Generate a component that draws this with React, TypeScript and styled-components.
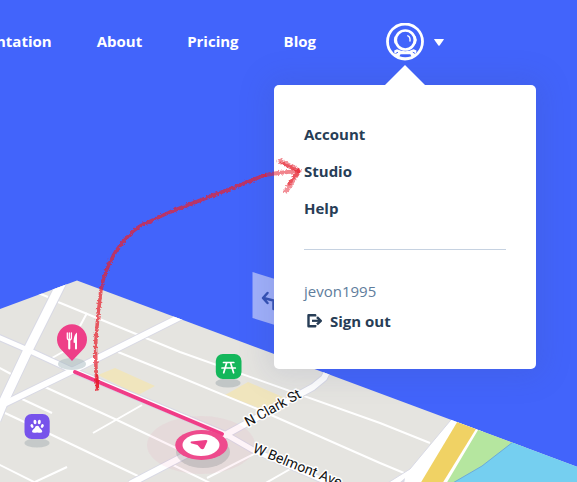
import React from "react";
import styled, { createGlobalStyle } from "styled-components";

const GlobalStyle = createGlobalStyle`
  *, *::before, *::after { box-sizing: border-box; }
  body {
    margin: 0;
    background: #4264fb;
    font-family: "Open Sans", "Noto Sans", sans-serif;
    font-size: 15px;
    line-height: 20px;
  }
`;

const Page = styled.div`
  position: relative;
  min-height: 100vh;
  overflow: hidden;
  background: #4264fb;
`;

const Backdrop = styled.svg`
  position: absolute;
  inset: 0;
  width: 100%;
  height: 100%;
`;

const Annotation = styled(Backdrop)`
  z-index: 3;
  pointer-events: none;
`;

const Header = styled.header`
  position: relative;
  z-index: 2;
  display: flex;
  align-items: flex-start;
  justify-content: flex-end;
  gap: 70px;
  padding: 23px 133px 0 0;
`;

const Nav = styled.nav`
  display: flex;
  gap: 45px;
  padding-top: 8px;
`;

const NavLink = styled.a`
  color: #fff;
  font-weight: 700;
  text-decoration: none;
`;

const Account = styled.div`
  position: relative;
`;

const AccountButton = styled.button`
  display: flex;
  align-items: center;
  gap: 10px;
  padding: 0;
  border: 0;
  background: none;
  color: #fff;
  cursor: pointer;
`;

const Menu = styled.div`
  position: absolute;
  top: 62px;
  right: -92px;
  width: 262px;
  padding: 30px 30px 38px;
  border-radius: 5px;
  background: #fff;
  box-shadow: 0 0 30px 8px rgba(60, 75, 130, 0.13);

  &::before {
    content: "";
    position: absolute;
    top: -20px;
    left: 111px;
    border: 20px solid transparent;
    border-top: 0;
    border-bottom-color: #fff;
  }
`;

const MenuList = styled.ul`
  display: flex;
  flex-direction: column;
  margin: 0;
  padding: 0;
  list-style: none;
`;

const MenuItem = styled.li`
  padding: 9px 0 8px;
`;

const MenuLink = styled.a`
  display: block;
  color: #273d56;
  font-size: 15px;
  font-weight: 700;
  text-decoration: none;
`;

const Divider = styled.hr`
  height: 1px;
  margin: 23px 0 31px;
  border: 0;
  background: #c6d2e1;
`;

const UserName = styled.div`
  color: #607d9c;
  font-size: 15px;
`;

const SignOut = styled.button`
  display: flex;
  align-items: center;
  gap: 7px;
  margin-top: 10px;
  padding: 0 0 0 3px;
  border: 0;
  background: none;
  color: #273d56;
  font: inherit;
  font-weight: 700;
  cursor: pointer;
`;

const NAV_ITEMS = ["Documentation", "About", "Pricing", "Blog"];
const MENU_ITEMS = ["Account", "Studio", "Help"];

const WIDE_ROADS = [
  { d: "M63 280L28 350L3 403L-4 420", w: 9 },
  { d: "M-2 337L28 350L67 368L227 435L253 450L350 492", w: 5 },
  { d: "M184 315L82 366L43 385L-2 407", w: 6 },
  { d: "M329 368L324 378L313 387L227 434L180 458L130 484", w: 6 },
];

const SIDE_STREETS = [
  "M38 293L48 297",
  "M58 302L180 352L380 423L430 443",
  "M118 352L180 377L262 411L380 463L404 473",
  "M45 387L117 420L178 449",
  "M173 465L212 484",
  "M93 433L142 405",
  "M22 399L52 413",
  "M-2 367L11 374",
  "M5 413L50 434L140 477",
  "M-2 464L38 484",
  "M35 482L67 467",
  "M87 313L80 326",
  "M52 358L68 349",
  "M207 478L256 453",
  "M264 484L292 468",
];

const STREET_LABEL = {
  fontFamily: '"Roboto", "Inter", sans-serif',
  fontSize: 14,
  fill: "#111",
  stroke: "#fff",
  strokeWidth: 3,
  strokeLinejoin: "round" as const,
  paintOrder: "stroke",
};

function Avatar() {
  return (
    <svg width="38" height="38" viewBox="0 0 38 38" fill="none" aria-hidden="true">
      <circle cx="19" cy="18.500" r="17.500" stroke="currentColor" strokeWidth="2.800" />
      <circle cx="19.300" cy="17" r="9.500" stroke="currentColor" strokeWidth="2.600" />
      <path d="M9.200 13.500Q7.400 17 9.200 20.500ZM29.400 13.500Q31.200 17 29.400 20.500Z" fill="currentColor" stroke="currentColor" />
      <path d="M21.800 12.800Q24.400 13.800 24 18" stroke="currentColor" strokeWidth="1.400" strokeLinecap="round" />
      <path d="M11 26.300Q19.300 30 27.600 26.300L30.500 27.500L30 31.500Q25 36 19 36Q13 36 8.500 31.500L8.200 27.500Z" fill="currentColor" />
      <path d="M14.500 31.300H24.300L25.300 33.200Q19 35.200 13.500 33.200Z" fill="#4264fb" />
      <path d="M9.500 30.500L12 29.200M29.300 30.500L26.800 29.200" stroke="#4264fb" strokeWidth="1" />
    </svg>
  );
}

function Caret() {
  return (
    <svg width="10" height="7" viewBox="0 0 10 7" fill="currentColor" aria-hidden="true">
      <path d="M.6 0H9.400Q10.200 0 9.700.8L5.600 6.400Q5 7.100 4.400 6.400L.3.800Q-.2 0 .6 0Z" />
    </svg>
  );
}

function SignOutIcon() {
  return (
    <svg width="16" height="14" viewBox="0 0 16 14" fill="none" stroke="currentColor" aria-hidden="true">
      <path d="M8.200 2.600V1.300H1.500V12.300H8.200V11" strokeWidth="2.400" strokeLinejoin="round" />
      <path d="M5 6.800H13" strokeWidth="2.200" />
      <path d="M10 3.200L13.800 6.800L10 10.400" strokeWidth="2.500" strokeLinejoin="round" />
    </svg>
  );
}

function CityMap() {
  return (
    <Backdrop viewBox="0 0 577 482" preserveAspectRatio="xMaxYMin slice" aria-label="Street map">
      <defs>
        <clipPath id="plane">
          <path d="M-2 309.700L77 280.500L579 467.500V484H-2Z" />
        </clipPath>
      </defs>

      <g clipPath="url(#plane)">
        <path d="M-2 260H600V500H-2Z" fill="#e5e4e0" />
        <path d="M98 375L115 368L155 386L138 395ZM225 395L248 382L285 398L262 409Z" fill="#f0e5bd" />

        <g fill="none" stroke="#fff" strokeWidth="2">
          {SIDE_STREETS.map((d) => (
            <path key={d} d={d} />
          ))}
        </g>
        <g fill="none" stroke="#d8d9e5" strokeLinejoin="round">
          {WIDE_ROADS.map(({ d, w }) => (
            <path key={d} d={d} strokeWidth={w + 2} />
          ))}
        </g>
        <g fill="none" stroke="#fff" strokeLinejoin="round">
          {WIDE_ROADS.map(({ d, w }) => (
            <path key={d} d={d} strokeWidth={w} />
          ))}
        </g>

        <path d="M455 415L410 469L386 484H450L490 420Z" fill="#fff" stroke="#d8d9e5" />
        <path d="M398 484L405 478L404 484Z" fill="#d8d9e5" />
        <path d="M459 419L420 484H442L479 424Z" fill="#f0d264" />
        <path d="M481 425L446 484H460L530 445Z" fill="#b5e69f" />
        <path d="M579 460L513 442L482 466L451 484H579Z" fill="#75cff0" />
        <path d="M513 442L482 466L451 484" fill="none" stroke="#6cabd8" />
      </g>

      <ellipse cx="201" cy="445" rx="54" ry="29" fill="#f03c87" opacity=".06" />
      <path d="M75 372L222 434" stroke="#f03c87" strokeWidth="4" strokeLinecap="round" />

      <text {...STREET_LABEL} transform="translate(248 427) rotate(-29)">N Clark St</text>
      <text {...STREET_LABEL} transform="translate(252 452) rotate(22)">W Belmont Ave</text>

      <ellipse cx="203" cy="452" rx="27" ry="16" fill="#697075" opacity=".24" />
      <ellipse cx="201.500" cy="445" rx="26.300" ry="15" fill="#ee4b8d" />
      <ellipse cx="201" cy="445" rx="18.500" ry="11" fill="#fff" />
      <path d="M191 441.600L206 440Q208 440 207 442L204 448.500Q202.500 449.800 200.600 448.500L197.500 445L191 443.300Q190 442 191 441.600Z" fill="#ee3f88" />

      <g>
        <ellipse cx="72" cy="364" rx="14" ry="6" fill="#a7b9c0" opacity=".5" />
        <path d="M72 361L62 350.500A15 15 0 1 1 82 350.500Z" fill="#ee3f88" />
        <path d="M67.300 333V337.500Q67.300 340 69.300 340Q71.400 340 71.400 337.500V333M69.300 333V348" fill="none" stroke="#fff" strokeWidth="1.300" strokeLinecap="round" />
        <path d="M69.300 340V348.500" stroke="#fff" strokeWidth="2" strokeLinecap="round" />
        <path d="M77 332.500V348.500Q77 349.500 76 349.500Q75 349.500 75 348.500V343L73.500 342.500Q73.500 335 77 332.500Z" fill="#fff" />
      </g>

      <g>
        <ellipse cx="37" cy="443" rx="12.500" ry="4.500" fill="#9ea8ac" opacity=".45" />
        <rect x="24.500" y="414" width="25.200" height="25" rx="7" fill="#7753eb" />
        <g fill="#fff">
          <ellipse cx="32" cy="426" rx="1.400" ry="2" transform="rotate(-25 32 426)" />
          <ellipse cx="35" cy="422" rx="1.500" ry="2.200" transform="rotate(-8 35 422)" />
          <ellipse cx="39.300" cy="422" rx="1.500" ry="2.200" transform="rotate(8 39.300 422)" />
          <ellipse cx="42.300" cy="426" rx="1.400" ry="2" transform="rotate(25 42.300 426)" />
          <path d="M37.200 425.700Q39 425.700 39.700 428Q42.400 430 42.300 431.500Q42 433.600 37.200 432.400Q32.300 433.600 32 431.500Q31.900 430 34.700 428Q35.300 425.700 37.200 425.700Z" />
        </g>
      </g>

      <g>
        <ellipse cx="228" cy="383" rx="12.500" ry="4.500" fill="#9ea8ac" opacity=".5" />
        <rect x="215.800" y="354" width="25.700" height="25" rx="7" fill="#14b75b" />
        <path d="M223.500 362.500H233.800M222 368H235.300M226.800 362.500L223.700 372.800M230.500 362.500L233.600 372.800" fill="none" stroke="#fff" strokeWidth="1.700" strokeLinecap="round" />
      </g>

      <path d="M252.500 272L320 293V339L252.500 318Z" fill="#a0b0fb" />
      <path d="M267.500 293L263 298L267.500 303M263.500 298L273.500 300.500V309" fill="none" stroke="#3451b5" strokeWidth="2.500" strokeLinecap="round" strokeLinejoin="round" />
    </Backdrop>
  );
}

function HandDrawnArrow() {
  return (
    <Annotation viewBox="0 0 577 482" preserveAspectRatio="xMaxYMin slice" aria-hidden="true">
      <defs>
        <filter id="crayon" x="-10%" y="-10%" width="120%" height="120%">
          <feTurbulence type="fractalNoise" baseFrequency=".45" numOctaves="2" seed="4" result="grain" />
          <feDisplacementMap in="SourceGraphic" in2="grain" scale="4" xChannelSelector="R" yChannelSelector="G" />
        </filter>
      </defs>
      <g fill="none" stroke="#e6202f" strokeLinecap="round" strokeLinejoin="round" filter="url(#crayon)">
        <path d="M97.500 389L96 370L95.500 345L98 315L101 290Q104 271 116 251Q129 233 140 226L170 212L188 205L222 192L265 175" strokeWidth="3.500" opacity=".72" />
        <path d="M265 175L278 173L298 171" strokeWidth="4" opacity=".55" />
        <path d="M97.500 388L97 376" strokeWidth="2.500" opacity=".8" />
        <path d="M280 161L299 171L286 191" strokeWidth="5" opacity=".5" />
        <path d="M281 163L299 171L289 184" strokeWidth="3" opacity=".55" />
      </g>
    </Annotation>
  );
}

export default function App() {
  return (
    <Page>
      <GlobalStyle />
      <CityMap />
      <Header>
        <Nav aria-label="Main">
          {NAV_ITEMS.map((label) => (
            <NavLink key={label} href="#">
              {label}
            </NavLink>
          ))}
        </Nav>
        <Account>
          <AccountButton type="button" aria-label="Account menu" aria-expanded="true">
            <Avatar />
            <Caret />
          </AccountButton>
          <Menu>
            <MenuList>
              {MENU_ITEMS.map((label) => (
                <MenuItem key={label}>
                  <MenuLink href="#">{label}</MenuLink>
                </MenuItem>
              ))}
            </MenuList>
            <Divider />
            <UserName>jevon1995</UserName>
            <SignOut type="button">
              <SignOutIcon />
              Sign out
            </SignOut>
          </Menu>
        </Account>
      </Header>
      <HandDrawnArrow />
    </Page>
  );
}
